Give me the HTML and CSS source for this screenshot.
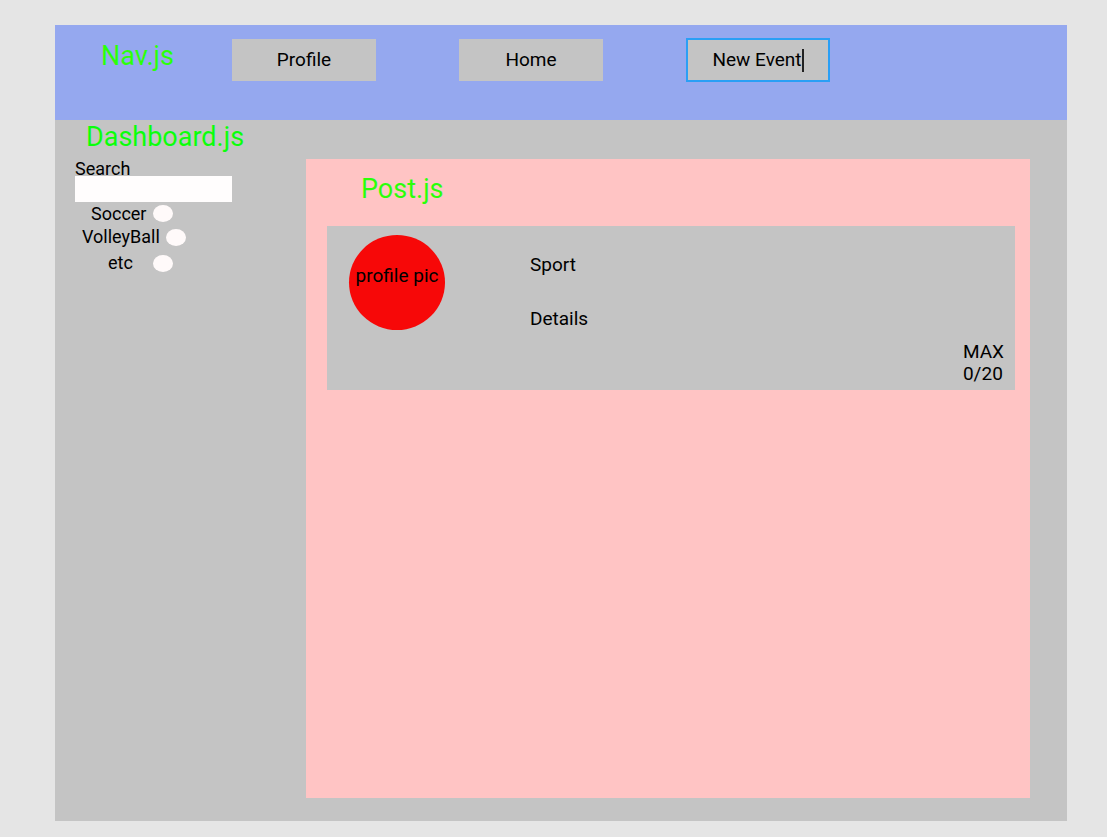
FILE: index.html
```html
<!DOCTYPE html>
<html lang="en">
<head>
  <meta charset="utf-8">
  <meta name="viewport" content="width=device-width, initial-scale=1">
  <title>Dashboard</title>
  <link rel="stylesheet" href="styles.css">
</head>
<body>
  <div class="app">
    <header class="nav">
      <h1 class="title nav-title">Nav.js</h1>
      <nav class="nav-links">
        <button class="nav-button" type="button">Profile</button>
        <button class="nav-button" type="button">Home</button>
        <button class="nav-button nav-button-active" type="button">New Event<span class="caret"></span></button>
      </nav>
    </header>
    <main class="dashboard">
      <h2 class="title dashboard-title">Dashboard.js</h2>
      <div class="columns">
        <form class="filters">
          <label class="search-label" for="search">Search</label>
          <input class="search" id="search" type="text">
          <div class="option option-soccer">
            <label for="soccer">Soccer</label>
            <input class="radio" id="soccer" type="radio" name="sport">
          </div>
          <div class="option option-volleyball">
            <label for="volleyball">VolleyBall</label>
            <input class="radio" id="volleyball" type="radio" name="sport">
          </div>
          <div class="option option-etc">
            <label for="etc">etc</label>
            <input class="radio" id="etc" type="radio" name="sport">
          </div>
        </form>
        <section class="posts">
          <h2 class="title posts-title">Post.js</h2>
          <article class="card">
            <div class="avatar">profile pic</div>
            <div class="card-text">
              <p>Sport</p>
              <p>Details</p>
            </div>
            <p class="capacity">MAX<br>0/20</p>
          </article>
        </section>
      </div>
    </main>
  </div>
</body>
</html>
```
FILE: styles.css
```css
* {
  box-sizing: border-box;
}

body {
  margin: 0;
  background: #e5e5e5;
  color: #000;
  font-family: Roboto, "Liberation Sans", sans-serif;
  font-size: 19px;
  line-height: 22px;
}

p {
  margin: 0;
}

.app {
  display: flex;
  flex-direction: column;
  min-height: 100vh;
  padding: 25px 40px 16px 55px;
}

.title {
  margin: 0;
  color: #2bff0a;
  font-size: 27px;
  font-weight: 400;
  line-height: 32px;
}

.nav {
  display: flex;
  align-items: flex-start;
  padding: 13px 20px 38px 46px;
  background: #95a8ef;
}

.nav-title {
  width: 131px;
  padding-top: 2px;
}

.nav-links {
  display: flex;
  align-items: center;
  gap: 83px;
}

.nav-button {
  display: flex;
  align-items: center;
  justify-content: center;
  width: 144px;
  height: 42px;
  padding: 0;
  border: 0;
  background: #c4c4c4;
  color: inherit;
  font: inherit;
}

.nav-button-active {
  height: 44px;
  border: 2px solid #2a9ff5;
}

.caret {
  width: 2px;
  height: 23px;
  background: #222;
}

.dashboard {
  display: flex;
  flex: 1;
  flex-direction: column;
  padding: 0 37px 23px 20px;
  background: #c4c4c4;
}

.dashboard-title {
  padding: 1px 0 6px 11px;
  color: #0bff0b;
}

.columns {
  display: flex;
  flex: 1;
}

.filters {
  display: flex;
  flex-direction: column;
  align-items: flex-start;
  width: 231px;
  font-size: 18px;
}

.search-label {
  padding-top: 2px;
  line-height: 15px;
}

.search {
  width: 157px;
  height: 26px;
  padding: 0 4px;
  border: 0;
  background: #fffdfd;
  font: inherit;
}

.option {
  display: flex;
  align-items: center;
  gap: 7px;
  height: 24px;
}

.option-soccer {
  height: 23px;
  padding-left: 16px;
}

.option-volleyball {
  gap: 6px;
  padding-left: 7px;
}

.option-etc {
  gap: 20px;
  height: 28px;
  padding-left: 33px;
}

.radio {
  width: 20px;
  height: 17px;
  margin: 0;
  border-radius: 50%;
  background: #fffafa;
  appearance: none;
}

.radio:checked {
  background: #2a9ff5;
}

.posts {
  flex: 1;
  padding: 14px 15px 20px 21px;
  background: #ffc4c4;
}

.posts-title {
  padding: 0 0 21px 34px;
}

.card {
  display: flex;
  min-height: 164px;
  padding: 9px 11px 5px 22px;
  background: #c4c4c4;
}

.avatar {
  display: flex;
  justify-content: center;
  width: 96px;
  height: 95px;
  padding-top: 30px;
  border-radius: 50%;
  background: #f70808;
  white-space: nowrap;
}

.card-text {
  display: flex;
  flex: 1;
  flex-direction: column;
  gap: 32px;
  padding: 19px 0 0 85px;
}

.capacity {
  align-self: flex-end;
}
```
